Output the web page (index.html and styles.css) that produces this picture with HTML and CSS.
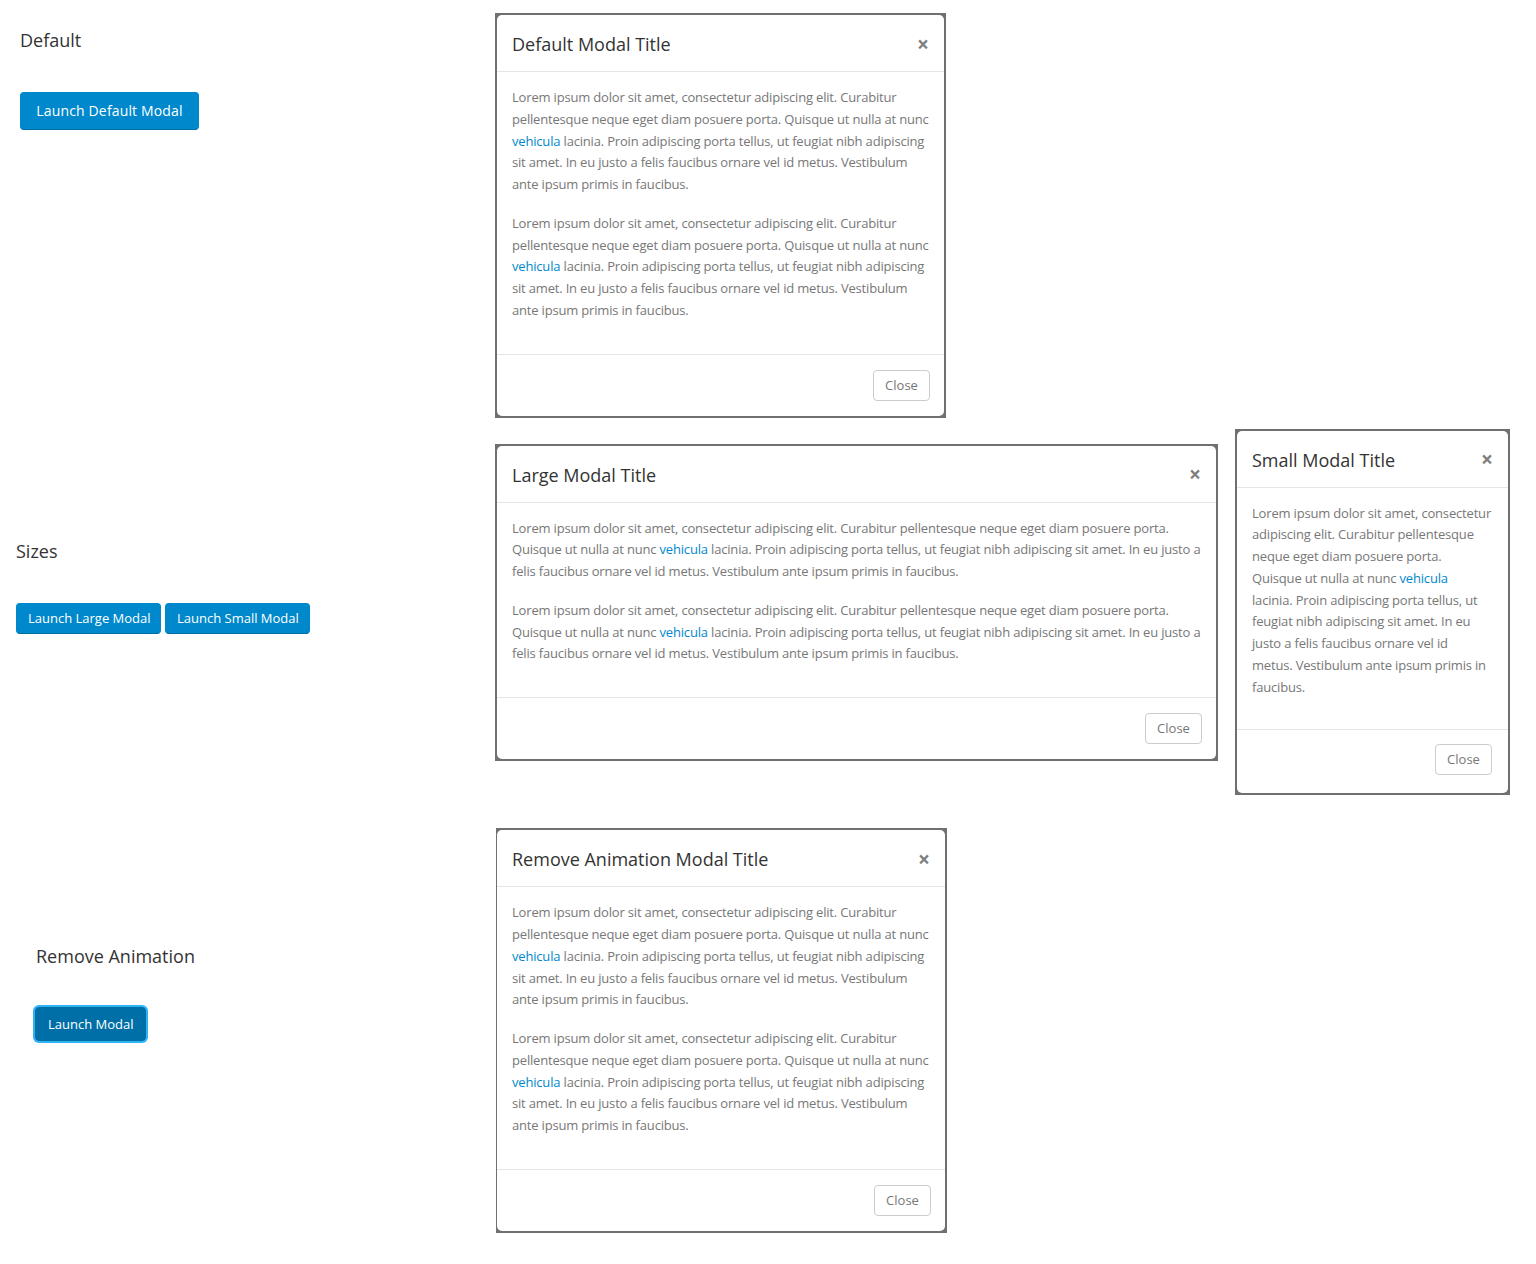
FILE: index.html
```html
<!DOCTYPE html>
<html lang="en">
<head>
<meta charset="utf-8">
<title>Modals</title>
<link rel="stylesheet" href="styles.css">
</head>
<body>
<main class="page">
  <section class="row row-default">
    <div class="side side-default">
      <h4 class="label">Default</h4>
      <button class="btn btn-primary btn-lg-ish">Launch Default Modal</button>
    </div>
    <div class="modal-frame modal-md">
      <div class="modal-content">
        <div class="modal-header">
          <h4 class="modal-title">Default Modal Title</h4>
          <span class="close">&times;</span>
        </div>
        <div class="modal-body">
          <p>Lorem ipsum dolor sit amet, consectetur adipiscing elit. Curabitur pellentesque neque eget diam posuere porta. Quisque ut nulla at nunc <a href="#">vehicula</a> lacinia. Proin adipiscing porta tellus, ut feugiat nibh adipiscing sit amet. In eu justo a felis faucibus ornare vel id metus. Vestibulum ante ipsum primis in faucibus.</p>
          <p>Lorem ipsum dolor sit amet, consectetur adipiscing elit. Curabitur pellentesque neque eget diam posuere porta. Quisque ut nulla at nunc <a href="#">vehicula</a> lacinia. Proin adipiscing porta tellus, ut feugiat nibh adipiscing sit amet. In eu justo a felis faucibus ornare vel id metus. Vestibulum ante ipsum primis in faucibus.</p>
        </div>
        <div class="modal-footer">
          <button class="btn btn-default">Close</button>
        </div>
      </div>
    </div>
  </section>

  <section class="row row-sizes">
    <div class="side side-sizes">
      <h4 class="label">Sizes</h4>
      <div class="btn-pair">
        <button class="btn btn-primary btn-sm-ish">Launch Large Modal</button>
        <button class="btn btn-primary btn-sm-ish">Launch Small Modal</button>
      </div>
    </div>
    <div class="modal-frame modal-lg">
      <div class="modal-content">
        <div class="modal-header">
          <h4 class="modal-title">Large Modal Title</h4>
          <span class="close">&times;</span>
        </div>
        <div class="modal-body">
          <p>Lorem ipsum dolor sit amet, consectetur adipiscing elit. Curabitur pellentesque neque eget diam posuere porta. Quisque ut nulla at nunc <a href="#">vehicula</a> lacinia. Proin adipiscing porta tellus, ut feugiat nibh adipiscing sit amet. In eu justo a felis faucibus ornare vel id metus. Vestibulum ante ipsum primis in faucibus.</p>
          <p>Lorem ipsum dolor sit amet, consectetur adipiscing elit. Curabitur pellentesque neque eget diam posuere porta. Quisque ut nulla at nunc <a href="#">vehicula</a> lacinia. Proin adipiscing porta tellus, ut feugiat nibh adipiscing sit amet. In eu justo a felis faucibus ornare vel id metus. Vestibulum ante ipsum primis in faucibus.</p>
        </div>
        <div class="modal-footer">
          <button class="btn btn-default">Close</button>
        </div>
      </div>
    </div>
    <div class="modal-frame modal-sm">
      <div class="modal-content">
        <div class="modal-header">
          <h4 class="modal-title">Small Modal Title</h4>
          <span class="close">&times;</span>
        </div>
        <div class="modal-body">
          <p>Lorem ipsum dolor sit amet, consectetur adipiscing elit. Curabitur pellentesque neque eget diam posuere porta. Quisque ut nulla at nunc <a href="#">vehicula</a> lacinia.&nbsp;Proin adipiscing porta tellus, ut feugiat nibh adipiscing sit amet. In eu justo a felis faucibus ornare vel id metus.&nbsp;Vestibulum ante ipsum primis in faucibus.</p>
        </div>
        <div class="modal-footer">
          <button class="btn btn-default">Close</button>
        </div>
      </div>
    </div>
  </section>

  <section class="row row-anim">
    <div class="side side-anim">
      <h4 class="label">Remove Animation</h4>
      <button class="btn btn-primary btn-active">Launch Modal</button>
    </div>
    <div class="modal-frame modal-md modal-anim">
      <div class="modal-content">
        <div class="modal-header">
          <h4 class="modal-title">Remove Animation Modal Title</h4>
          <span class="close">&times;</span>
        </div>
        <div class="modal-body">
          <p>Lorem ipsum dolor sit amet, consectetur adipiscing elit. Curabitur pellentesque neque eget diam posuere porta. Quisque ut nulla at nunc <a href="#">vehicula</a> lacinia. Proin adipiscing porta tellus, ut feugiat nibh adipiscing sit amet. In eu justo a felis faucibus ornare vel id metus. Vestibulum ante ipsum primis in faucibus.</p>
          <p>Lorem ipsum dolor sit amet, consectetur adipiscing elit. Curabitur pellentesque neque eget diam posuere porta. Quisque ut nulla at nunc <a href="#">vehicula</a> lacinia. Proin adipiscing porta tellus, ut feugiat nibh adipiscing sit amet. In eu justo a felis faucibus ornare vel id metus. Vestibulum ante ipsum primis in faucibus.</p>
        </div>
        <div class="modal-footer">
          <button class="btn btn-default">Close</button>
        </div>
      </div>
    </div>
  </section>
</main>
</body>
</html>
```
FILE: styles.css
```css
* { box-sizing: border-box; }
html, body { margin: 0; padding: 0; background: #fff; }
body {
  font-family: "Open Sans", "Liberation Sans", Arial, sans-serif;
  color: #777;
  font-size: 13px;
}
.page { display: flex; flex-direction: column; padding-top: 13px; }
.row { display: flex; align-items: flex-start; }
.row-sizes { margin-top: 11px; }
.row-anim { margin-top: 33px; }

.side { width: 495px; flex: none; display: flex; flex-direction: column; align-items: flex-start; }
.side-default { padding: 14px 0 0 20px; }
.side-sizes { padding: 109px 0 0 16px; }
.side-anim { padding: 115px 0 0 35px; width: 496px; }
.side-anim .label { margin-left: 1px; }

.label {
  margin: 0;
  font-size: 18px;
  line-height: 26px;
  font-weight: 400;
  color: #333;
}
.side-default .btn { margin-top: 39px; }
.side-sizes .btn-pair { margin-top: 39px; display: flex; gap: 4px; }
.side-anim .btn { margin-top: 38px; }

.btn {
  font-family: "Open Sans", "Liberation Sans", Arial, sans-serif;
  border-radius: 4px;
  cursor: pointer;
  white-space: nowrap;
}
.btn-primary {
  background: #0088cc;
  color: #fff;
  border: 1px solid #0088cc;
  border-bottom-color: #006da3;
}
.btn-lg-ish { font-size: 14px; line-height: 20px; padding: 8px 14px; width: 179px; letter-spacing: 0.15px; }
.btn-sm-ish { font-size: 13px; line-height: 19px; padding: 5px 11px; width: 145px; }
.btn-active {
  font-size: 13px; line-height: 18px; padding: 7px 12px;
  width: 111px;
  background: #006fa8;
  border-color: #006fa8;
  box-shadow: 0 0 0 2px #2fb3f5;
}
.btn-default {
  background: #fff;
  border: 1px solid #ccc;
  color: #777;
  font-size: 13px;
  line-height: 17px;
  padding: 6px 11px;
  width: 57px;
}

.modal-frame {
  background: #707070;
  padding: 2px;
  flex: none;
}
.modal-md { width: 451px; }
.modal-anim { padding-left: 1px; }
.modal-lg { width: 723px; margin-top: 15px; }
.modal-sm { width: 275px; margin-left: 17px; }

.modal-content {
  background: #fff;
  border-radius: 5px;
}
.modal-header {
  display: flex;
  align-items: center;
  justify-content: space-between;
  padding: 16px 15px 14px;
  border-bottom: 1px solid #e5e5e5;
}
.modal-title {
  margin: 0;
  font-size: 18px;
  line-height: 26px;
  font-weight: 400;
  color: #333;
}
.close {
  font-size: 21px;
  font-weight: 700;
  line-height: 1;
  color: #000;
  opacity: 0.5;
}
.modal-body { padding: 15px; }
.modal-body p {
  margin: 0 0 17px;
  font-size: 13px;
  line-height: 21.75px;
  color: #777;
  letter-spacing: -0.18px;
}
.modal-body a { color: #0088cc; text-decoration: none; }
.modal-footer {
  display: flex;
  justify-content: flex-end;
  padding: 15px 14px 15px 15px;
  border-top: 1px solid #e5e5e5;
}
.modal-sm .modal-body { padding-bottom: 14px; }
.modal-sm .modal-footer { padding: 14px 16px 18px 15px; }
```
